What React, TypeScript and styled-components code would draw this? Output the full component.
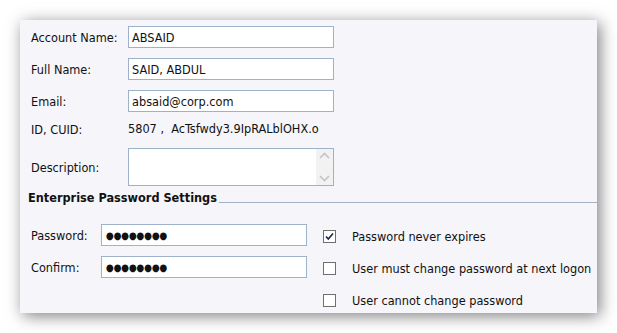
import React from 'react';
import styled, { createGlobalStyle } from 'styled-components';

const GlobalStyle = createGlobalStyle`
  html, body {
    margin: 0;
    padding: 0;
    background: #ffffff;
  }
  body {
    font-family: "DejaVu Sans Condensed", "DejaVu Sans", sans-serif;
    font-size: 12.6px;
    color: #111111;
  }
`;

const Page = styled.div`
  padding: 20px;
  width: 577px;
`;

const Panel = styled.div`
  box-sizing: border-box;
  width: 577px;
  height: 293px;
  background: #f5f5fa;
  box-shadow: 3px 3px 15px rgba(0, 0, 0, 0.5);
  padding: 6px 0 0 8px;
  display: flex;
  flex-direction: column;
`;

const FieldRow = styled.div<{ labelWidth?: number; mb?: number }>`
  display: grid;
  grid-template-columns: ${p => p.labelWidth ?? 97}px 206px;
  align-items: center;
  margin-bottom: ${p => p.mb ?? 10}px;
  padding-left: 3px;
`;

const Label = styled.span`
  white-space: nowrap;
`;

const TextBox = styled.div<{ tall?: boolean }>`
  box-sizing: border-box;
  height: ${p => (p.tall ? 38 : 22)}px;
  border: 1px solid #9fb0ca;
  background: #ffffff;
  display: flex;
  align-items: center;
  padding-left: 3px;
  white-space: nowrap;
  overflow: hidden;
`;

const MultiLine = styled(TextBox)`
  align-items: stretch;
  padding-left: 0;
  justify-content: flex-end;
`;

const ScrollStrip = styled.div`
  width: 17px;
  background: #f2f2f2;
  display: flex;
  flex-direction: column;
  align-items: center;
  justify-content: space-between;
  padding: 3px 0;
`;

const StaticValue = styled.span`
  line-height: 22px;
  white-space: nowrap;
`;

const SectionHeader = styled.div`
  display: flex;
  align-items: flex-end;
  margin-top: 4px;
`;

const SectionTitle = styled.span`
  font-weight: bold;
  white-space: nowrap;
`;

const SectionRule = styled.div`
  flex: 1;
  height: 1px;
  background: #a3b0c8;
  margin-left: 2px;
  margin-bottom: 2px;
`;

const Columns = styled.div`
  display: flex;
  gap: 16px;
  margin-top: 19px;
`;

const LeftColumn = styled.div`
  display: flex;
  flex-direction: column;
`;

const RightColumn = styled.div`
  display: flex;
  flex-direction: column;
  gap: 17px;
  padding-top: 5px;
`;

const Dots = styled.span`
  font-size: 10px;
  letter-spacing: -0.2px;
  padding-left: 1px;
`;

const CheckRow = styled.label`
  display: flex;
  align-items: center;
  gap: 16px;
  white-space: nowrap;
`;

const CheckBox = styled.span`
  box-sizing: border-box;
  width: 13px;
  height: 13px;
  border: 1px solid #6f6f6f;
  background: #ffffff;
  display: flex;
  align-items: center;
  justify-content: center;
`;

const Chevron = ({ up }: { up?: boolean }) => (
  <svg width="11" height="7" viewBox="0 0 11 7">
    <path
      d={up ? 'M1 6 L5.5 1.5 L10 6' : 'M1 1 L5.5 5.5 L10 1'}
      fill="none"
      stroke="#c4c4c4"
      strokeWidth="1.6"
    />
  </svg>
);

const Check = ({ checked }: { checked?: boolean }) => (
  <CheckBox>
    {checked && (
      <svg width="9" height="9" viewBox="0 0 9 9">
        <path d="M1 4.5 L3.3 7 L8 1.5" fill="none" stroke="#1a2440" strokeWidth="1.6" />
      </svg>
    )}
  </CheckBox>
);

export default function App() {
  return (
    <>
      <GlobalStyle />
      <Page>
        <Panel>
          <FieldRow>
            <Label>Account Name:</Label>
            <TextBox>ABSAID</TextBox>
          </FieldRow>
          <FieldRow>
            <Label>Full Name:</Label>
            <TextBox>SAID, ABDUL</TextBox>
          </FieldRow>
          <FieldRow mb={6}>
            <Label>Email:</Label>
            <TextBox>absaid@corp.com</TextBox>
          </FieldRow>
          <FieldRow mb={8}>
            <Label>ID, CUID:</Label>
            <StaticValue>5807 ,&nbsp; AcTsfwdy3.9IpRALblOHX.o</StaticValue>
          </FieldRow>
          <FieldRow mb={0}>
            <Label>Description:</Label>
            <MultiLine tall>
              <ScrollStrip>
                <Chevron up />
                <Chevron />
              </ScrollStrip>
            </MultiLine>
          </FieldRow>
          <SectionHeader>
            <SectionTitle>Enterprise Password Settings</SectionTitle>
            <SectionRule />
          </SectionHeader>
          <Columns>
            <LeftColumn>
              <FieldRow labelWidth={70}>
                <Label>Password:</Label>
                <TextBox>
                  <Dots>●●●●●●●●</Dots>
                </TextBox>
              </FieldRow>
              <FieldRow labelWidth={70}>
                <Label>Confirm:</Label>
                <TextBox>
                  <Dots>●●●●●●●●</Dots>
                </TextBox>
              </FieldRow>
            </LeftColumn>
            <RightColumn>
              <CheckRow>
                <Check checked />
                Password never expires
              </CheckRow>
              <CheckRow>
                <Check />
                User must change password at next logon
              </CheckRow>
              <CheckRow>
                <Check />
                User cannot change password
              </CheckRow>
            </RightColumn>
          </Columns>
        </Panel>
      </Page>
    </>
  );
}
